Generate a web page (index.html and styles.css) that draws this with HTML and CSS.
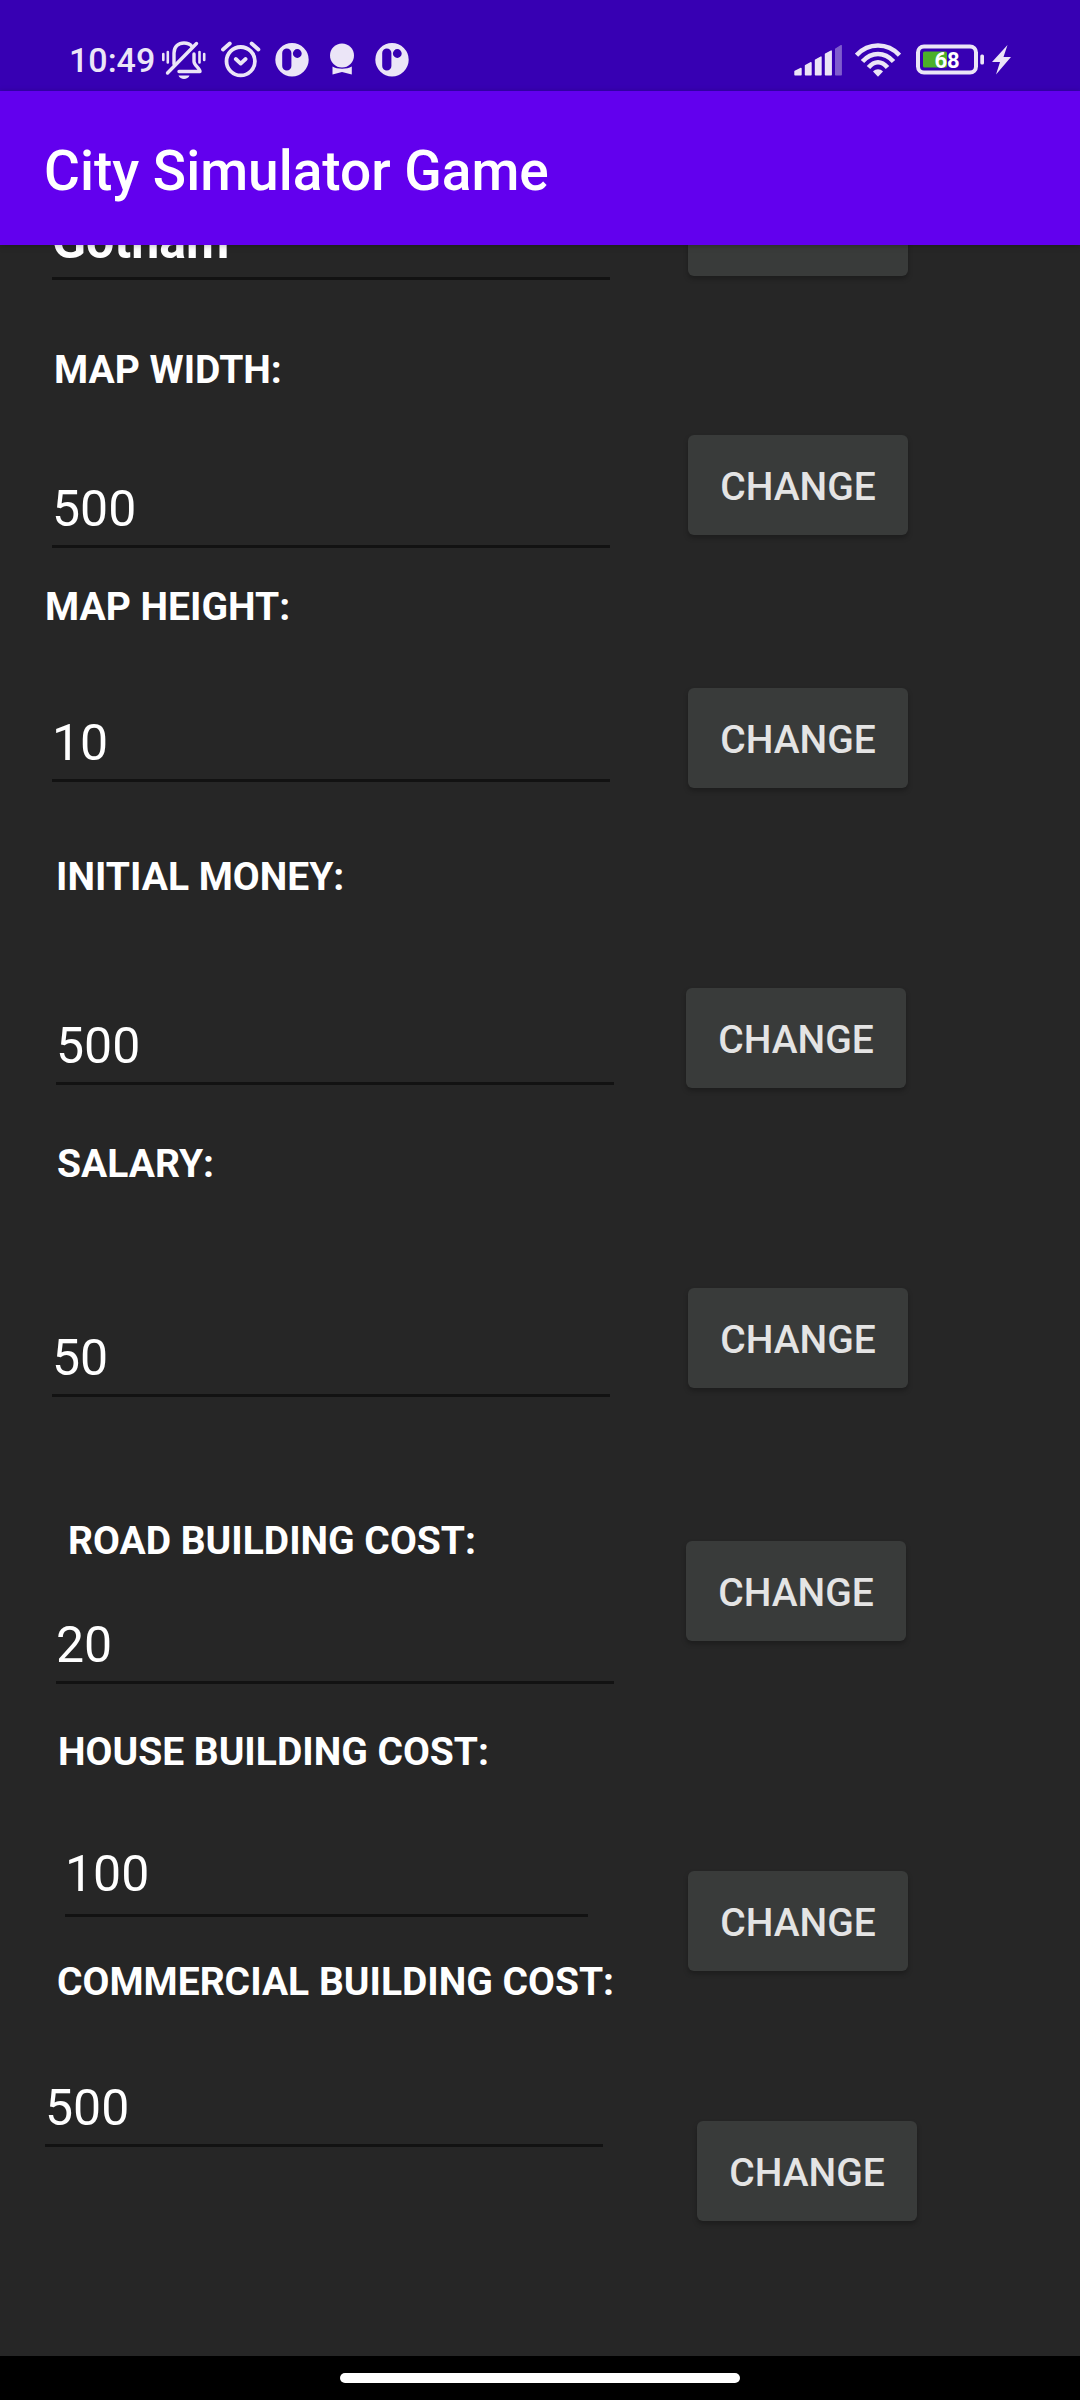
FILE: index.html
```html
<!DOCTYPE html>
<html lang="en">
<head>
<meta charset="utf-8">
<meta name="viewport" content="width=device-width, initial-scale=1">
<title>City Simulator Game</title>
<link rel="stylesheet" href="styles.css">
</head>
<body>
<div class="status-bar">
  <div class="status-group">
    <span class="clock">10:49</span>
    <svg class="icon" width="46" height="40" viewBox="0 0 46 40" aria-hidden="true">
      <g fill="none" stroke="currentColor" stroke-width="3.4" stroke-linecap="round" stroke-linejoin="round">
        <path d="M13 24V13C13 6.500 17.500 3 23 3C26.500 3 29 4 31 6.500"/>
        <path d="M6.500 33L35.500 3.500"/>
        <path d="M33 14V21.500C33 25.500 39 28 39 31.500H18"/>
        <path d="M2.300 14V20M6.800 12V22.500M38.500 12V22.500M43.200 14V20" stroke-width="2.600"/>
      </g>
      <path d="M17.500 35.500H28.500C27 40 19 40 17.500 35.500Z" fill="currentColor"/>
    </svg>
    <svg class="icon" width="42" height="40" viewBox="0 0 42 40" aria-hidden="true">
      <g fill="none" stroke="currentColor" stroke-width="3.800" stroke-linecap="round" stroke-linejoin="round">
        <circle cx="20.700" cy="21.200" r="14.200"/>
        <path d="M15.800 19L20.700 23.600L25.600 19M3 9.500L9.800 3.500M38.400 9.500L31.600 3.500"/>
      </g>
    </svg>
    <svg class="icon" width="34" height="40" viewBox="0 0 34 40" aria-hidden="true">
      <path fill="currentColor" fill-rule="evenodd" d="M17 3a16.700 16.700 0 1 0 0 33.400a16.700 16.700 0 1 0 0-33.400ZM11.800 8.500a4.600 4.600 0 0 1 4.600 4.600V26a4.600 4.600 0 0 1-9.200 0V13.100a4.600 4.600 0 0 1 4.600-4.600ZM22.300 9.100a4.400 4.400 0 1 1 0 8.800a4.400 4.400 0 1 1 0-8.800Z"/>
    </svg>
    <svg class="icon" width="40" height="40" viewBox="0 0 40 40" aria-hidden="true">
      <g fill="currentColor"><circle cx="20" cy="15.500" r="12"/><path d="M10.500 26.500C15 29.500 25 29.500 29.800 26.500V34.500L20 32L10.500 34.500Z"/></g>
    </svg>
    <svg class="icon" width="34" height="40" viewBox="0 0 34 40" aria-hidden="true">
      <path fill="currentColor" fill-rule="evenodd" d="M17 3a16.700 16.700 0 1 0 0 33.400a16.700 16.700 0 1 0 0-33.400ZM11.800 8.500a4.600 4.600 0 0 1 4.600 4.600V26a4.600 4.600 0 0 1-9.200 0V13.100a4.600 4.600 0 0 1 4.600-4.600ZM22.300 9.100a4.400 4.400 0 1 1 0 8.800a4.400 4.400 0 1 1 0-8.800Z"/>
    </svg>
  </div>
  <div class="status-group">
    <svg class="icon" width="48" height="40" viewBox="0 0 48 40" aria-hidden="true">
      <g fill="currentColor" stroke="currentColor" stroke-width="1.400" stroke-linejoin="round">
        <path d="M1 31.500L7 28.500V34.800H1ZM11.500 25.500L17 22.700V34.800H11.500ZM21.500 20L27 17V34.800H21.500ZM31.500 14L37.200 11V34.800H31.500Z"/>
        <path opacity=".4" d="M41.700 9L47.200 5.700V34.800H41.700Z"/>
      </g>
    </svg>
    <svg class="icon" width="46" height="40" viewBox="0 0 46 40" aria-hidden="true">
      <g fill="none" stroke="currentColor" stroke-width="4.600">
        <path d="M1.500 15.200C13.500 2.300 32.500 2.300 44.500 15.200"/>
        <path d="M7.500 21.500C16.500 11.500 29.500 11.500 38.500 21.500"/>
        <path d="M13.500 27.500C19.500 20.500 26.500 20.500 32.500 27.500"/>
      </g>
      <path fill="currentColor" d="M18 31.500C21 28.500 25 28.500 28 31.500L23 36.800Z"/>
    </svg>
    <svg class="icon icon-battery" width="68" height="40" viewBox="0 0 68 40" role="img">
      <rect x="2" y="6.500" width="58" height="26" rx="6" fill="none" stroke="currentColor" stroke-width="4"/>
      <rect x="7" y="11.500" width="24" height="16" rx="1.500" fill="#4caf2a"/>
      <rect x="64.300" y="14.500" width="3.700" height="10" rx="1.500" fill="currentColor"/>
      <text x="31" y="28" text-anchor="middle">68</text>
    </svg>
    <svg class="icon icon-bolt" width="19" height="40" viewBox="0 0 19 40" aria-hidden="true">
      <path fill="currentColor" d="M15.500 5L0 22H8L4 34.500L19 17H11.500Z"/>
    </svg>
  </div>
</div>

<header class="app-bar"><h1>City Simulator Game</h1></header>

<main class="settings">
  <div class="fields">
    <div class="field city-name">
      <input type="text" aria-label="City name" value="Gotham">
    </div>
    <div class="field map-width">
      <label for="map-width">MAP WIDTH:</label>
      <input id="map-width" type="text" inputmode="numeric" value="500">
    </div>
    <div class="field map-height">
      <label for="map-height">MAP HEIGHT:</label>
      <input id="map-height" type="text" inputmode="numeric" value="10">
    </div>
    <div class="field money">
      <label for="money">INITIAL MONEY:</label>
      <input id="money" type="text" inputmode="numeric" value="500">
    </div>
    <div class="field salary">
      <label for="salary">SALARY:</label>
      <input id="salary" type="text" inputmode="numeric" value="50">
    </div>
    <div class="field road">
      <label for="road">ROAD BUILDING COST:</label>
      <input id="road" type="text" inputmode="numeric" value="20">
    </div>
    <div class="field house">
      <label for="house">HOUSE BUILDING COST:</label>
      <input id="house" type="text" inputmode="numeric" value="100">
    </div>
    <div class="field commercial">
      <label for="commercial">COMMERCIAL BUILDING COST:</label>
      <input id="commercial" type="text" inputmode="numeric" value="500">
    </div>
  </div>
  <div class="actions">
    <button class="change-name" type="button">CHANGE</button>
    <button class="change-width" type="button">CHANGE</button>
    <button class="change-height" type="button">CHANGE</button>
    <button class="change-money" type="button">CHANGE</button>
    <button class="change-salary" type="button">CHANGE</button>
    <button class="change-road" type="button">CHANGE</button>
    <button class="change-house" type="button">CHANGE</button>
    <button class="change-commercial" type="button">CHANGE</button>
  </div>
</main>

<div class="nav-bar"><div class="nav-pill"></div></div>
</body>
</html>
```

FILE: styles.css
```css
* {
  box-sizing: border-box;
}

body {
  display: flex;
  flex-direction: column;
  min-height: 100vh;
  margin: 0;
  background: #262626;
  color: #fff;
  font-family: Roboto, "Liberation Sans", sans-serif;
}

/* System status bar */
.status-bar {
  display: flex;
  justify-content: space-between;
  align-items: center;
  height: 91px;
  padding: 28px 69px 0;
  background: #3700b3;
  color: #ebe5f7;
}

.status-group {
  display: flex;
  align-items: center;
  gap: 13px;
}

.clock {
  width: 79px;
  font-size: 34px;
  font-weight: 500;
  line-height: 40px;
  white-space: nowrap;
}

.icon {
  display: block;
  flex: none;
}

.icon-battery {
  margin-left: 2px;
}

.icon-battery text {
  fill: #fff;
  font-size: 22px;
  font-weight: 700;
}

.icon-bolt {
  margin-left: -5px;
}

/* Title bar */
.app-bar {
  position: relative;
  display: flex;
  align-items: center;
  height: 154px;
  padding: 6px 44px 0;
  background: #6200ee;
  box-shadow: 0 1px 6px rgba(0, 0, 0, .25);
}

.app-bar h1 {
  margin: 0;
  font-size: 55px;
  font-weight: 500;
  line-height: 64px;
}

/* Settings list: values on the left, their buttons on the right */
.settings {
  display: grid;
  grid-template-columns: minmax(0, 1fr) 394px;
  flex: 1;
  overflow: hidden;
}

.field {
  display: flex;
  flex-direction: column;
  padding: 0 76px 0 52px;
}

.field label {
  align-self: flex-start;
  font-size: 39px;
  font-weight: 700;
  line-height: 50px;
  white-space: nowrap;
}

.field input {
  width: 100%;
  height: 71px;
  padding: 0 0 5px;
  border: 0;
  border-bottom: 3px solid #121212;
  border-radius: 0;
  outline: 0;
  background: none;
  color: #fff;
  font: 400 50px Roboto, "Liberation Sans", sans-serif;
}

/* Already scrolled partly under the title bar */
.city-name {
  margin-top: -36px;
}

.city-name input {
  font-weight: 700;
}

.map-width {
  gap: 82px;
  margin-top: 65px;
}

.map-width label {
  margin-left: 2px;
}

.map-height {
  gap: 79px;
  margin-top: 34px;
}

.map-height label {
  margin-left: -7px;
}

.money {
  gap: 112px;
  margin-top: 70px;
  padding: 0 72px 0 56px;
}

.salary {
  gap: 137px;
  margin-top: 54px;
}

.salary label {
  margin-left: 5px;
}

.road {
  gap: 47px;
  margin-top: 119px;
  padding: 0 72px 0 56px;
}

.road label {
  margin-left: 12px;
}

.house {
  gap: 64px;
  margin-top: 43px;
  padding: 0 98px 0 65px;
}

.house label {
  margin-left: -7px;
}

.house input {
  height: 76px;
  padding-bottom: 8px;
}

.commercial {
  gap: 69px;
  margin-top: 40px;
  padding: 0 83px 0 45px;
}

.commercial label {
  margin-left: 12px;
}

.actions {
  display: flex;
  flex-direction: column;
  align-items: flex-start;
  padding: 0 0 135px 2px;
}

.actions button {
  width: 220px;
  height: 100px;
  padding: 3px 0 0;
  border: 0;
  border-radius: 6px;
  background: #393b3a;
  box-shadow: 0 3px 5px rgba(0, 0, 0, .25);
  color: #e4e4e4;
  font: 500 39px Roboto, "Liberation Sans", sans-serif;
}

.actions .change-name {
  margin-top: -69px;
}

.change-width {
  margin-top: 159px;
}

.change-height,
.change-road {
  margin-top: 153px;
}

.change-money,
.change-salary {
  margin-top: 200px;
}

.change-money,
.change-road {
  margin-left: -2px;
}

.change-house {
  margin-top: 230px;
}

.change-commercial {
  margin-top: 150px;
  margin-left: 9px;
}

/* System gesture bar */
.nav-bar {
  display: flex;
  justify-content: center;
  align-items: center;
  height: 44px;
  background: #000;
}

.nav-pill {
  width: 37%;
  height: 10px;
  border-radius: 5px;
  background: #fff;
}
```
